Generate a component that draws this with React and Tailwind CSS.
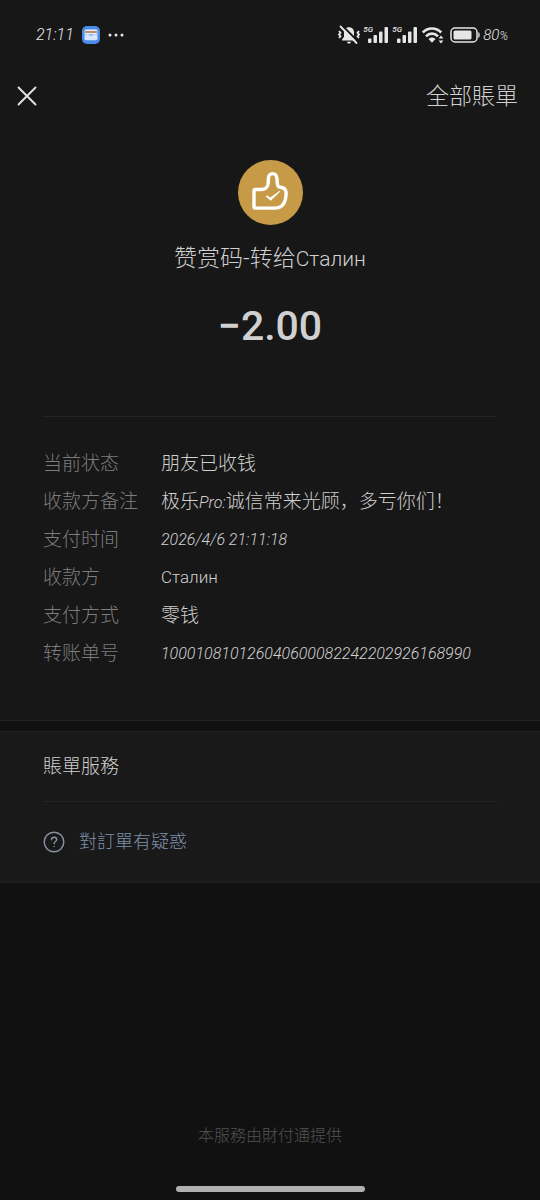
import React from 'react'

const details = [
  { label: '当前状态', value: '朋友已收钱' },
  { label: '收款方备注', value: <>极乐<span className="text-base italic leading-none">Pro:</span>诚信常来光顾，多亏你们！</> },
  { label: '支付时间', value: '2026/4/6 21:11:18', style: 'text-base italic' },
  { label: '收款方', value: 'Сталин', style: 'text-[17px]' },
  { label: '支付方式', value: '零钱' },
  { label: '转账单号', value: '100010810126040600082242202926168990', style: 'text-base italic' },
]

const MutedBell = () => (
  <svg className="h-5 w-[22px]" viewBox="0 0 22 20" fill="none" aria-hidden="true">
    <path d="M11 2.2c-3.2 0-5 2.2-5 5v4.5L4 14.6v.9h14v-.9l-2-2.900V7.200c0-2.800-1.800-5-5-5Z" fill="#e6e6e6" />
    <path d="M8.800 16.800h4.400c-.3 1.200-1.200 1.800-2.200 1.800s-1.900-.6-2.200-1.800Z" fill="#e6e6e6" />
    <path d="M4.800 1.200 20.500 17" stroke="#171717" strokeWidth="2" />
    <path d="M2.500 1.500 18.500 18" stroke="#e6e6e6" strokeWidth="1.800" strokeLinecap="round" />
    <path d="m1 6 1.500 1.800L1 9.500l1.500 1.800L1 13M21 6l-1.500 1.800L21 9.500l-1.500 1.800L21 13" stroke="#e6e6e6" strokeWidth="1.800" />
  </svg>
)

const Signal = () => (
  <span className="relative block h-5 w-[26px]">
    <svg className="h-5 w-[26px]" viewBox="0 0 26 20" fill="#e6e6e6" aria-hidden="true">
      <rect x="5" y="13.500" width="3.500" height="4.500" rx="1" />
      <rect x="10.500" y="10" width="3.500" height="8" rx="1" />
      <rect x="16" y="6.500" width="3.500" height="11.500" rx="1" />
      <rect x="21.500" y="2" width="3.500" height="16" rx="1" />
    </svg>
    <span className="absolute left-0 top-0 text-[8px] font-medium italic leading-[10px]">5G</span>
  </span>
)

const Wifi = () => (
  <svg className="h-5 w-[24px]" viewBox="0 0 24 20" fill="none" aria-hidden="true">
    <path d="M1.800 7.500c5-5.300 13.400-5.300 18.400 0" stroke="#e6e6e6" strokeWidth="2.600" />
    <path d="M5 11.300c3.400-3.600 8.600-3.600 12 0" stroke="#e6e6e6" strokeWidth="2.600" />
    <path d="M7.500 14c2-2 5-2 7 0L11 17.700Z" fill="#e6e6e6" />
    <path d="m20 10.500 2.400 3h-4.800Zm0 8-2.400-3h4.800Z" fill="#e6e6e6" />
  </svg>
)

const Battery = () => (
  <svg className="h-4 w-[30px]" viewBox="0 0 30 16" fill="none" aria-hidden="true">
    <rect x="1" y="1" width="26" height="14" rx="4" stroke="#e6e6e6" strokeWidth="1.500" />
    <rect x="3.500" y="3.500" width="18" height="9" rx="1.500" fill="#e6e6e6" />
    <path d="M28.300 5v6c1-.5 1.400-1.400 1.400-3s-.4-2.500-1.400-3Z" fill="#e6e6e6" />
  </svg>
)

function StatusBar() {
  return (
    <div className="flex h-[70px] items-center justify-between pl-9 pr-8 text-[#e6e6e6]">
      <div className="flex items-center gap-2">
        <span className="text-base italic">21:11</span>
        <svg className="h-[18px] w-[18px]" viewBox="0 0 18 18" aria-hidden="true">
          <rect width="18" height="18" rx="5" fill="#4a8bea" />
          <rect x="2.500" y="3.500" width="13" height="5" rx="1.500" fill="#e9eef8" />
          <rect x="3" y="5" width="12" height="2" fill="#b98f66" />
          <path d="M2.500 8.500h4c.5 1.300 4.500 1.300 5 0h4v4c0 1-.7 1.700-1.700 1.700H4.200c-1 0-1.700-.7-1.700-1.700Z" fill="#d7e6ff" />
        </svg>
        <svg className="h-1 w-4" viewBox="0 0 16 4" fill="#e6e6e6" aria-hidden="true">
          <circle cx="2" cy="2" r="1.500" />
          <circle cx="8" cy="2" r="1.500" />
          <circle cx="14" cy="2" r="1.500" />
        </svg>
      </div>
      <div className="flex items-center gap-[3px]">
        <MutedBell />
        <Signal />
        <Signal />
        <Wifi />
        <span className="pl-[2px]"><Battery /></span>
        <span className="text-[15px] font-light italic">80<span className="text-xs">%</span></span>
      </div>
    </div>
  )
}

function Header() {
  return (
    <header className="flex h-[52px] items-center justify-between pl-[17px] pr-[22px]">
      <button type="button" aria-label="關閉">
        <svg className="h-5 w-5" viewBox="0 0 20 20" fill="none" stroke="#e2e2e2" strokeWidth="1.900" strokeLinecap="round">
          <path d="m1.500 1.500 17 17M18.500 1.500l-17 17" />
        </svg>
      </button>
      <button type="button" className="pt-[2px] text-[23px] leading-8 text-[#d0d0d0]">全部賬單</button>
    </header>
  )
}

function Summary() {
  return (
    <section className="flex flex-col items-center pt-[38px]">
      <div className="flex size-[65px] items-center justify-center rounded-full bg-[#c79a48]">
        <svg className="size-11" viewBox="-2 -2 44 44" fill="none" stroke="#fff" strokeLinejoin="round" aria-hidden="true">
          <path d="M4 17.800c0-.8.500-1.300 1.300-1.300h5.900c4.200 0 6.800-2.600 7-6.500l.2-4.500C18.600 2.300 20.300.6 22.600.6s4 1.700 4.300 4.700l.5 5.500c.2 2.300 1.200 3.300 3.200 3.500 3.800.4 5.700 2.700 5.500 6.700-.4 8.200-3.900 14.100-11.300 14.100H5.300c-.8 0-1.300-.5-1.300-1.300Z" strokeWidth="3.400" />
          <path d="m15.600 23.200 1.300-.9 3.400 2.300 9.400-6.900.6.700-9.600 9.400Z" fill="#fff" stroke="none" />
        </svg>
      </div>
      <h1 className="mt-4 text-[23px] leading-9 text-[#d0d0d0]">
        赞赏码-转给<span className="text-[21px]">Сталин</span>
      </h1>
      <p className="mt-6 text-[41px] font-medium leading-[50px] text-[#d0d0d0]">−2.00</p>
    </section>
  )
}

export default function App() {
  return (
    <div lang="zh" className="flex min-h-screen flex-col bg-[#111111] font-light [font-family:Roboto,'Noto_Sans_CJK_SC',sans-serif]">
      <main className="border-b border-[#222222] bg-[#171717]">
        <StatusBar />
        <Header />
        <Summary />
        <dl className="mx-[43px] mt-[65px] border-t border-[#242424] pb-[47px] pt-7">
          {details.map(({ label, value, style = 'text-[19px]' }) => (
            <div key={label} className="grid h-[38px] grid-cols-[118px_1fr] items-center">
              <dt className="text-[19px] text-[#7d7d7d]">{label}</dt>
              <dd className={`whitespace-nowrap text-[#d0d0d0] ${style}`}>{value}</dd>
            </div>
          ))}
        </dl>
      </main>

      <section className="mt-[10px] border-y border-[#222222] bg-[#191919] px-[43px]">
        <h2 className="border-b border-[#242424] text-[19px] leading-[69px] text-[#d0d0d0]">賬單服務</h2>
        <a href="#help" className="flex h-20 items-center gap-[14px] text-lg text-[#7d90a9]">
          <svg className="size-[22px]" viewBox="0 0 22 22" fill="none" stroke="#8793a3" strokeWidth="1.400" strokeLinecap="round" aria-hidden="true">
            <circle cx="11" cy="11" r="9.800" />
            <path d="M8.500 8.800c0-1.500 1.100-2.500 2.600-2.500s2.600 1 2.600 2.300c0 1.900-2.600 2-2.600 4.100M11.100 15.400v.2" />
          </svg>
          對訂單有疑惑
        </a>
      </section>

      <footer className="mt-auto flex flex-col items-center pb-2">
        <p className="text-base leading-6 text-[#525252]">本服務由財付通提供</p>
        <div className="mt-[38px] h-[6px] w-[35%] rounded-full bg-[#b0b0b0]" />
      </footer>
    </div>
  )
}
